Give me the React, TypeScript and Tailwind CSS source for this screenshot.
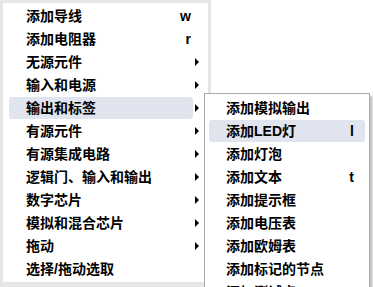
const mainItems: { label: string; key?: string; sub?: boolean; active?: boolean }[] = [
  { label: '添加导线', key: 'w' },
  { label: '添加电阻器', key: 'r' },
  { label: '无源元件', sub: true },
  { label: '输入和电源', sub: true },
  { label: '输出和标签', sub: true, active: true },
  { label: '有源元件', sub: true },
  { label: '有源集成电路', sub: true },
  { label: '逻辑门、输入和输出', sub: true },
  { label: '数字芯片', sub: true },
  { label: '模拟和混合芯片', sub: true },
  { label: '拖动', sub: true },
  { label: '选择/拖动选取' },
];

const subItems: { label: string; key?: string; active?: boolean }[] = [
  { label: '添加模拟输出' },
  { label: '添加LED灯', key: 'l', active: true },
  { label: '添加灯泡' },
  { label: '添加文本', key: 't' },
  { label: '添加提示框' },
  { label: '添加电压表' },
  { label: '添加欧姆表' },
  { label: '添加标记的节点' },
  { label: '添加测试点' },
];

const Arrow = () => (
  <svg width="4" height="8" viewBox="0 0 4 8" className="ml-[2px]">
    <path d="M0 0 L4 4 L0 8 Z" fill="#000" />
  </svg>
);

const App = () => {
  return (
    <div
      className="relative h-[287px] w-[373px] overflow-hidden bg-white text-[14px] font-bold text-black"
      style={{ fontFamily: '"Liberation Sans", "Noto Sans CJK SC", sans-serif' }}
    >
      <div className="w-[211px] border-[3px] border-b-[6px] border-[#e6e6e6] bg-white pt-[2px] pb-[1px]">
        {mainItems.map((it) => (
          <div key={it.label} className="flex h-[23px] items-start">
            <div
              className={`ml-[6px] flex h-[22px] w-[184px] items-center justify-between rounded-[3px] pl-[17px] pr-[2px] ${
                it.active ? 'bg-[#e0e4ef]' : ''
              }`}
            >
              <span className="leading-none">{it.label}</span>
              {it.key && <span className="leading-none">{it.key}</span>}
            </div>
            {it.sub && (
              <div className="flex h-[22px] items-center">
                <Arrow />
              </div>
            )}
          </div>
        ))}
      </div>

      <div className="absolute left-[204px] top-[93px] w-[166px] border border-[#aaaaaa] bg-white pt-[3px] shadow-[3px_3px_2px_rgba(0,0,0,0.22)]">
        {subItems.map((it) => (
          <div key={it.label} className="flex h-[23px] items-start">
            <div
              className={`ml-[4px] flex h-[22px] w-[156px] items-center justify-between rounded-[3px] pl-[17px] pr-[11px] ${
                it.active ? 'bg-[#e0e4ef]' : ''
              }`}
            >
              <span className="leading-none">{it.label}</span>
              {it.key && <span className="leading-none">{it.key}</span>}
            </div>
          </div>
        ))}
      </div>
    </div>
  );
};

export default App;
